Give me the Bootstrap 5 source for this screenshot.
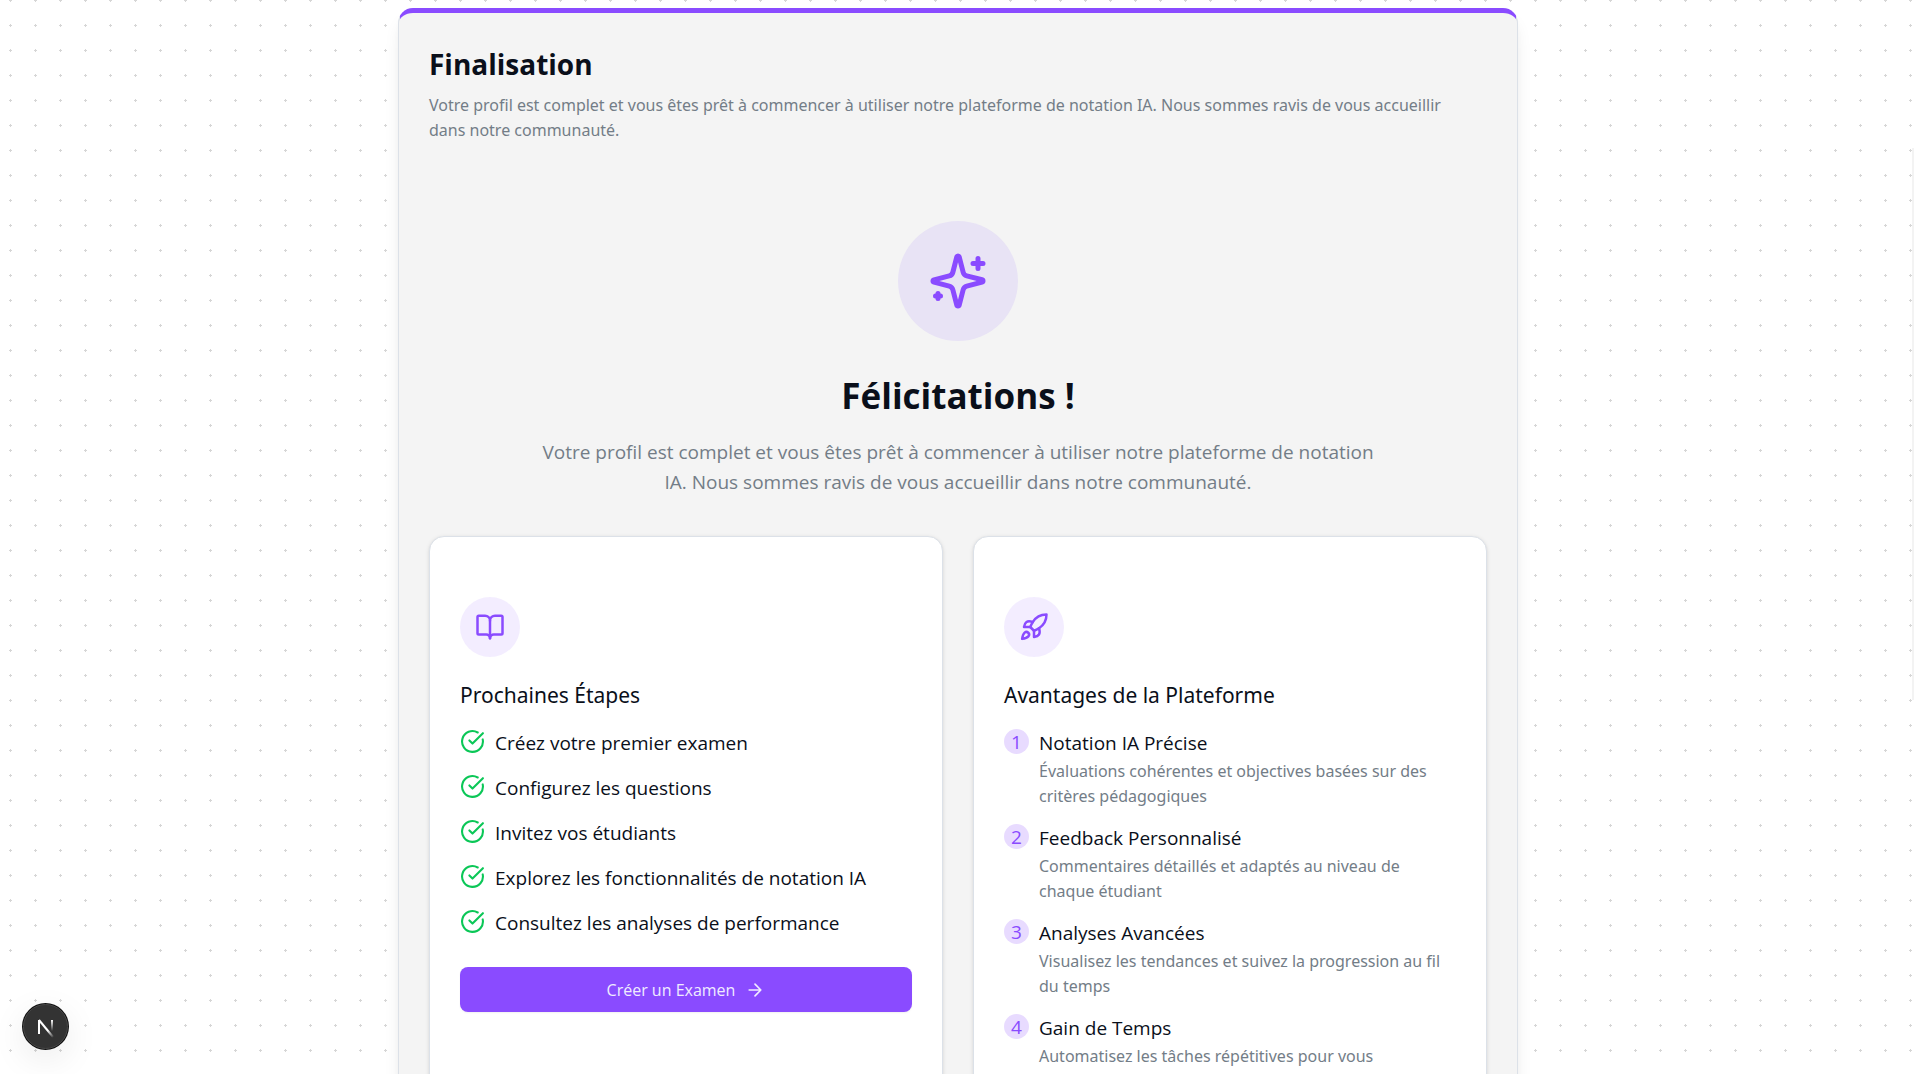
<!DOCTYPE html>
<html lang="fr">
<head>
<meta charset="utf-8">
<meta name="viewport" content="width=device-width, initial-scale=1">
<title>Finalisation</title>
<link href="https://cdn.jsdelivr.net/npm/bootstrap@5.3.0/dist/css/bootstrap.min.css" rel="stylesheet">
<style>
  :root { --violet: #8a4bff; --ink: #0a0f1a; --soft-ink: #737d87; --line: #dce1e8; }
  body { font-family: "Open Sans", "Noto Sans", sans-serif; color: var(--ink); font-size: 19px; line-height: 30px; }
  .dotted-page {
    background: #fff radial-gradient(circle, #d6d6d6 7%, transparent 7%) -2px -12px / 25px 25px;
    padding: 8px 0 0 2px;
    scrollbar-width: none;
  }
  .dotted-page::-webkit-scrollbar { display: none; }
  .panel {
    max-width: 1120px; padding: 30px; background: #f4f4f4;
    border: 1px solid var(--line); border-top: 5px solid var(--violet); border-radius: 15px;
    box-shadow: 0 12px 18px -4px rgba(0,0,0,.1), 0 5px 8px -5px rgba(0,0,0,.1);
  }
  .panel-title { font-size: 28px; line-height: 42px; font-weight: 700; margin-bottom: 8px; }
  .panel-head { padding-right: 15px; }
  .note { font-family: "Noto Sans", "Open Sans", sans-serif; font-size: 16px; line-height: 25px; color: var(--soft-ink); margin: 1px 0 -1px; }
  .hero { padding-top: 79px; margin-bottom: 39px; }
  .round-icon { width: 60px; height: 60px; color: var(--violet); background: rgba(138,75,255,.1); }
  .round-icon-lg { width: 120px; height: 120px; background: #e8e3f5; }
  .hero-title { font-size: 35px; line-height: 50px; font-weight: 700; margin: 30px 0 16px; }
  .hero-text { max-width: 840px; color: var(--soft-ink); }
  .tiles { --bs-gutter-x: 30px; --bs-gutter-y: 30px; }
  .tile {
    padding: 60px 30px; background: #fff; border: 1px solid var(--line); border-radius: 15px;
    box-shadow: 0 1px 4px rgba(0,0,0,.1), 0 1px 3px -1px rgba(0,0,0,.1);
  }
  .tile-title { font-family: "Noto Sans", "Open Sans", sans-serif; font-size: 21px; line-height: 36px; font-weight: 400; margin: 20px 0 15px; }
  .item-list { gap: 15px; }
  .item-list > li { gap: 10px; }
  .tick, .step-no { width: 25px; height: 25px; margin-top: 1px; flex: none; }
  .tick { color: #0bc757; }
  .step-no { color: var(--violet); background: rgba(138,75,255,.2); line-height: 27px; }
  .btn-violet {
    --bs-btn-color: #f0ebff; --bs-btn-bg: var(--violet); --bs-btn-hover-color: #fff; --bs-btn-hover-bg: #7a3bf0;
    --bs-btn-active-color: #fff; --bs-btn-active-bg: #7a3bf0;
    height: 45px; margin-top: 29px; gap: 10px; font-size: 16px; border: 0; border-radius: 8px;
    box-shadow: 0 1px 2px rgba(0,0,0,.06);
  }
  .ic { fill: none; stroke: currentColor; stroke-width: 2; stroke-linecap: round; stroke-linejoin: round; flex: none; }
  .dev-btn { left: 22px; bottom: 24px; width: 47px; height: 47px; box-shadow: 0 10px 34px rgba(0,0,0,.08); }
  .scroll-mark { right: 0; top: 148px; width: 2px; height: 552px; background: #f3f3f3; }
</style>
<script src="https://cdn.jsdelivr.net/npm/bootstrap@5.3.0/dist/js/bootstrap.bundle.min.js" defer></script>
</head>
<body>
<svg class="d-none" aria-hidden="true">
  <symbol id="check" viewBox="0 0 24 24"><path d="M21.801 10A10 10 0 1 1 17 3.335"/><path d="m9 11 3 3L22 4"/></symbol>
</svg>

<main class="dotted-page vh-100 overflow-auto">
  <section class="panel mx-auto">
    <header class="panel-head">
      <h1 class="panel-title">Finalisation</h1>
      <p class="note">Votre profil est complet et vous êtes prêt à commencer à utiliser notre plateforme de notation IA. Nous sommes ravis de vous accueillir dans notre communauté.</p>
    </header>

    <div class="hero d-flex flex-column align-items-center text-center">
      <div class="round-icon round-icon-lg rounded-circle d-flex align-items-center justify-content-center">
        <svg class="ic" width="60" height="60" viewBox="0 0 24 24" aria-hidden="true"><path d="M9.937 15.5A2 2 0 0 0 8.5 14.063l-6.135-1.582a.5.5 0 0 1 0-.962L8.5 9.936A2 2 0 0 0 9.937 8.5l1.582-6.135a.5.5 0 0 1 .963 0L14.063 8.5A2 2 0 0 0 15.5 9.937l6.135 1.581a.5.5 0 0 1 0 .964L15.5 14.063a2 2 0 0 0-1.437 1.437l-1.582 6.135a.5.5 0 0 1-.963 0z"/><path d="M20 3v4M22 5h-4M4 17v2M5 18H3"/></svg>
      </div>
      <h2 class="hero-title">Félicitations !</h2>
      <p class="hero-text mb-0">Votre profil est complet et vous êtes prêt à commencer à utiliser notre plateforme de notation IA. Nous sommes ravis de vous accueillir dans notre communauté.</p>
    </div>

    <div class="tiles row row-cols-1 row-cols-md-2">
      <div class="col">
        <article class="tile h-100">
          <div class="round-icon rounded-circle d-flex align-items-center justify-content-center">
            <svg class="ic" width="30" height="30" viewBox="0 0 24 24" aria-hidden="true"><path d="M12 7v14"/><path d="M3 18a1 1 0 0 1-1-1V4a1 1 0 0 1 1-1h5a4 4 0 0 1 4 4 4 4 0 0 1 4-4h5a1 1 0 0 1 1 1v13a1 1 0 0 1-1 1h-6a3 3 0 0 0-3 3 3 3 0 0 0-3-3z"/></svg>
          </div>
          <h3 class="tile-title">Prochaines Étapes</h3>
          <ul class="item-list list-unstyled d-flex flex-column mb-0">
            <li class="d-flex"><svg class="ic tick" aria-hidden="true"><use href="#check"/></svg><span>Créez votre premier examen</span></li>
            <li class="d-flex"><svg class="ic tick" aria-hidden="true"><use href="#check"/></svg><span>Configurez les questions</span></li>
            <li class="d-flex"><svg class="ic tick" aria-hidden="true"><use href="#check"/></svg><span>Invitez vos étudiants</span></li>
            <li class="d-flex"><svg class="ic tick" aria-hidden="true"><use href="#check"/></svg><span>Explorez les fonctionnalités de notation IA</span></li>
            <li class="d-flex"><svg class="ic tick" aria-hidden="true"><use href="#check"/></svg><span>Consultez les analyses de performance</span></li>
          </ul>
          <button type="button" class="btn btn-violet w-100 d-flex align-items-center justify-content-center">
            Créer un Examen
            <svg class="ic" width="20" height="20" viewBox="0 0 24 24" aria-hidden="true"><path d="M5 12h14M12 5l7 7-7 7"/></svg>
          </button>
        </article>
      </div>
      <div class="col">
        <article class="tile h-100">
          <div class="round-icon rounded-circle d-flex align-items-center justify-content-center">
            <svg class="ic" width="30" height="30" viewBox="0 0 24 24" aria-hidden="true"><path d="M4.5 16.5c-1.500 1.260-2 5-2 5s3.740-.5 5-2c.710-.840.700-2.130-.090-2.910a2.180 2.180 0 0 0-2.910-.090z"/><path d="m12 15-3-3a22 22 0 0 1 2-3.950A12.880 12.880 0 0 1 22 2c0 2.720-.780 7.500-6 11a22.350 22.350 0 0 1-4 2z"/><path d="M9 12H4s.550-3.030 2-4c1.620-1.080 5 0 5 0"/><path d="M12 15v5s3.030-.550 4-2c1.080-1.620 0-5 0-5"/></svg>
          </div>
          <h3 class="tile-title">Avantages de la Plateforme</h3>
          <ol class="item-list list-unstyled d-flex flex-column mb-0">
            <li class="d-flex"><span class="step-no rounded-circle text-center">1</span><div><div>Notation IA Précise</div><p class="note">Évaluations cohérentes et objectives basées sur des critères pédagogiques</p></div></li>
            <li class="d-flex"><span class="step-no rounded-circle text-center">2</span><div><div>Feedback Personnalisé</div><p class="note">Commentaires détaillés et adaptés au niveau de chaque étudiant</p></div></li>
            <li class="d-flex"><span class="step-no rounded-circle text-center">3</span><div><div>Analyses Avancées</div><p class="note">Visualisez les tendances et suivez la progression au fil du temps</p></div></li>
            <li class="d-flex"><span class="step-no rounded-circle text-center">4</span><div><div>Gain de Temps</div><p class="note">Automatisez les tâches répétitives pour vous concentrer sur l'enseignement</p></div></li>
          </ol>
        </article>
      </div>
    </div>
  </section>
</main>

<div class="scroll-mark position-fixed"></div>
<button type="button" class="dev-btn position-fixed btn p-0 border-0 rounded-circle" aria-label="Outils de développement">
  <svg class="d-block" width="47" height="47" viewBox="0 0 47 47" aria-hidden="true">
    <defs>
      <linearGradient id="fadeDown" gradientUnits="userSpaceOnUse" x1="0" y1="17" x2="0" y2="28"><stop offset="0" stop-color="#fff"/><stop offset="1" stop-color="#fff" stop-opacity="0"/></linearGradient>
      <linearGradient id="fadeDiag" gradientUnits="userSpaceOnUse" x1="25" y1="28" x2="31" y2="35"><stop offset="0" stop-color="#fff"/><stop offset="1" stop-color="#fff" stop-opacity="0"/></linearGradient>
    </defs>
    <circle cx="23.500" cy="23.500" r="23.500" fill="#111"/>
    <circle cx="23.500" cy="23.500" r="22" fill="#333" stroke="#484848" stroke-width="1"/>
    <path d="M17 31V17" stroke="#fff" stroke-width="2"/>
    <path d="M17 17L31 34" stroke="url(#fadeDiag)" stroke-width="2"/>
    <path d="M29 17h2v11h-2z" fill="url(#fadeDown)"/>
  </svg>
</button>
</body>
</html>
